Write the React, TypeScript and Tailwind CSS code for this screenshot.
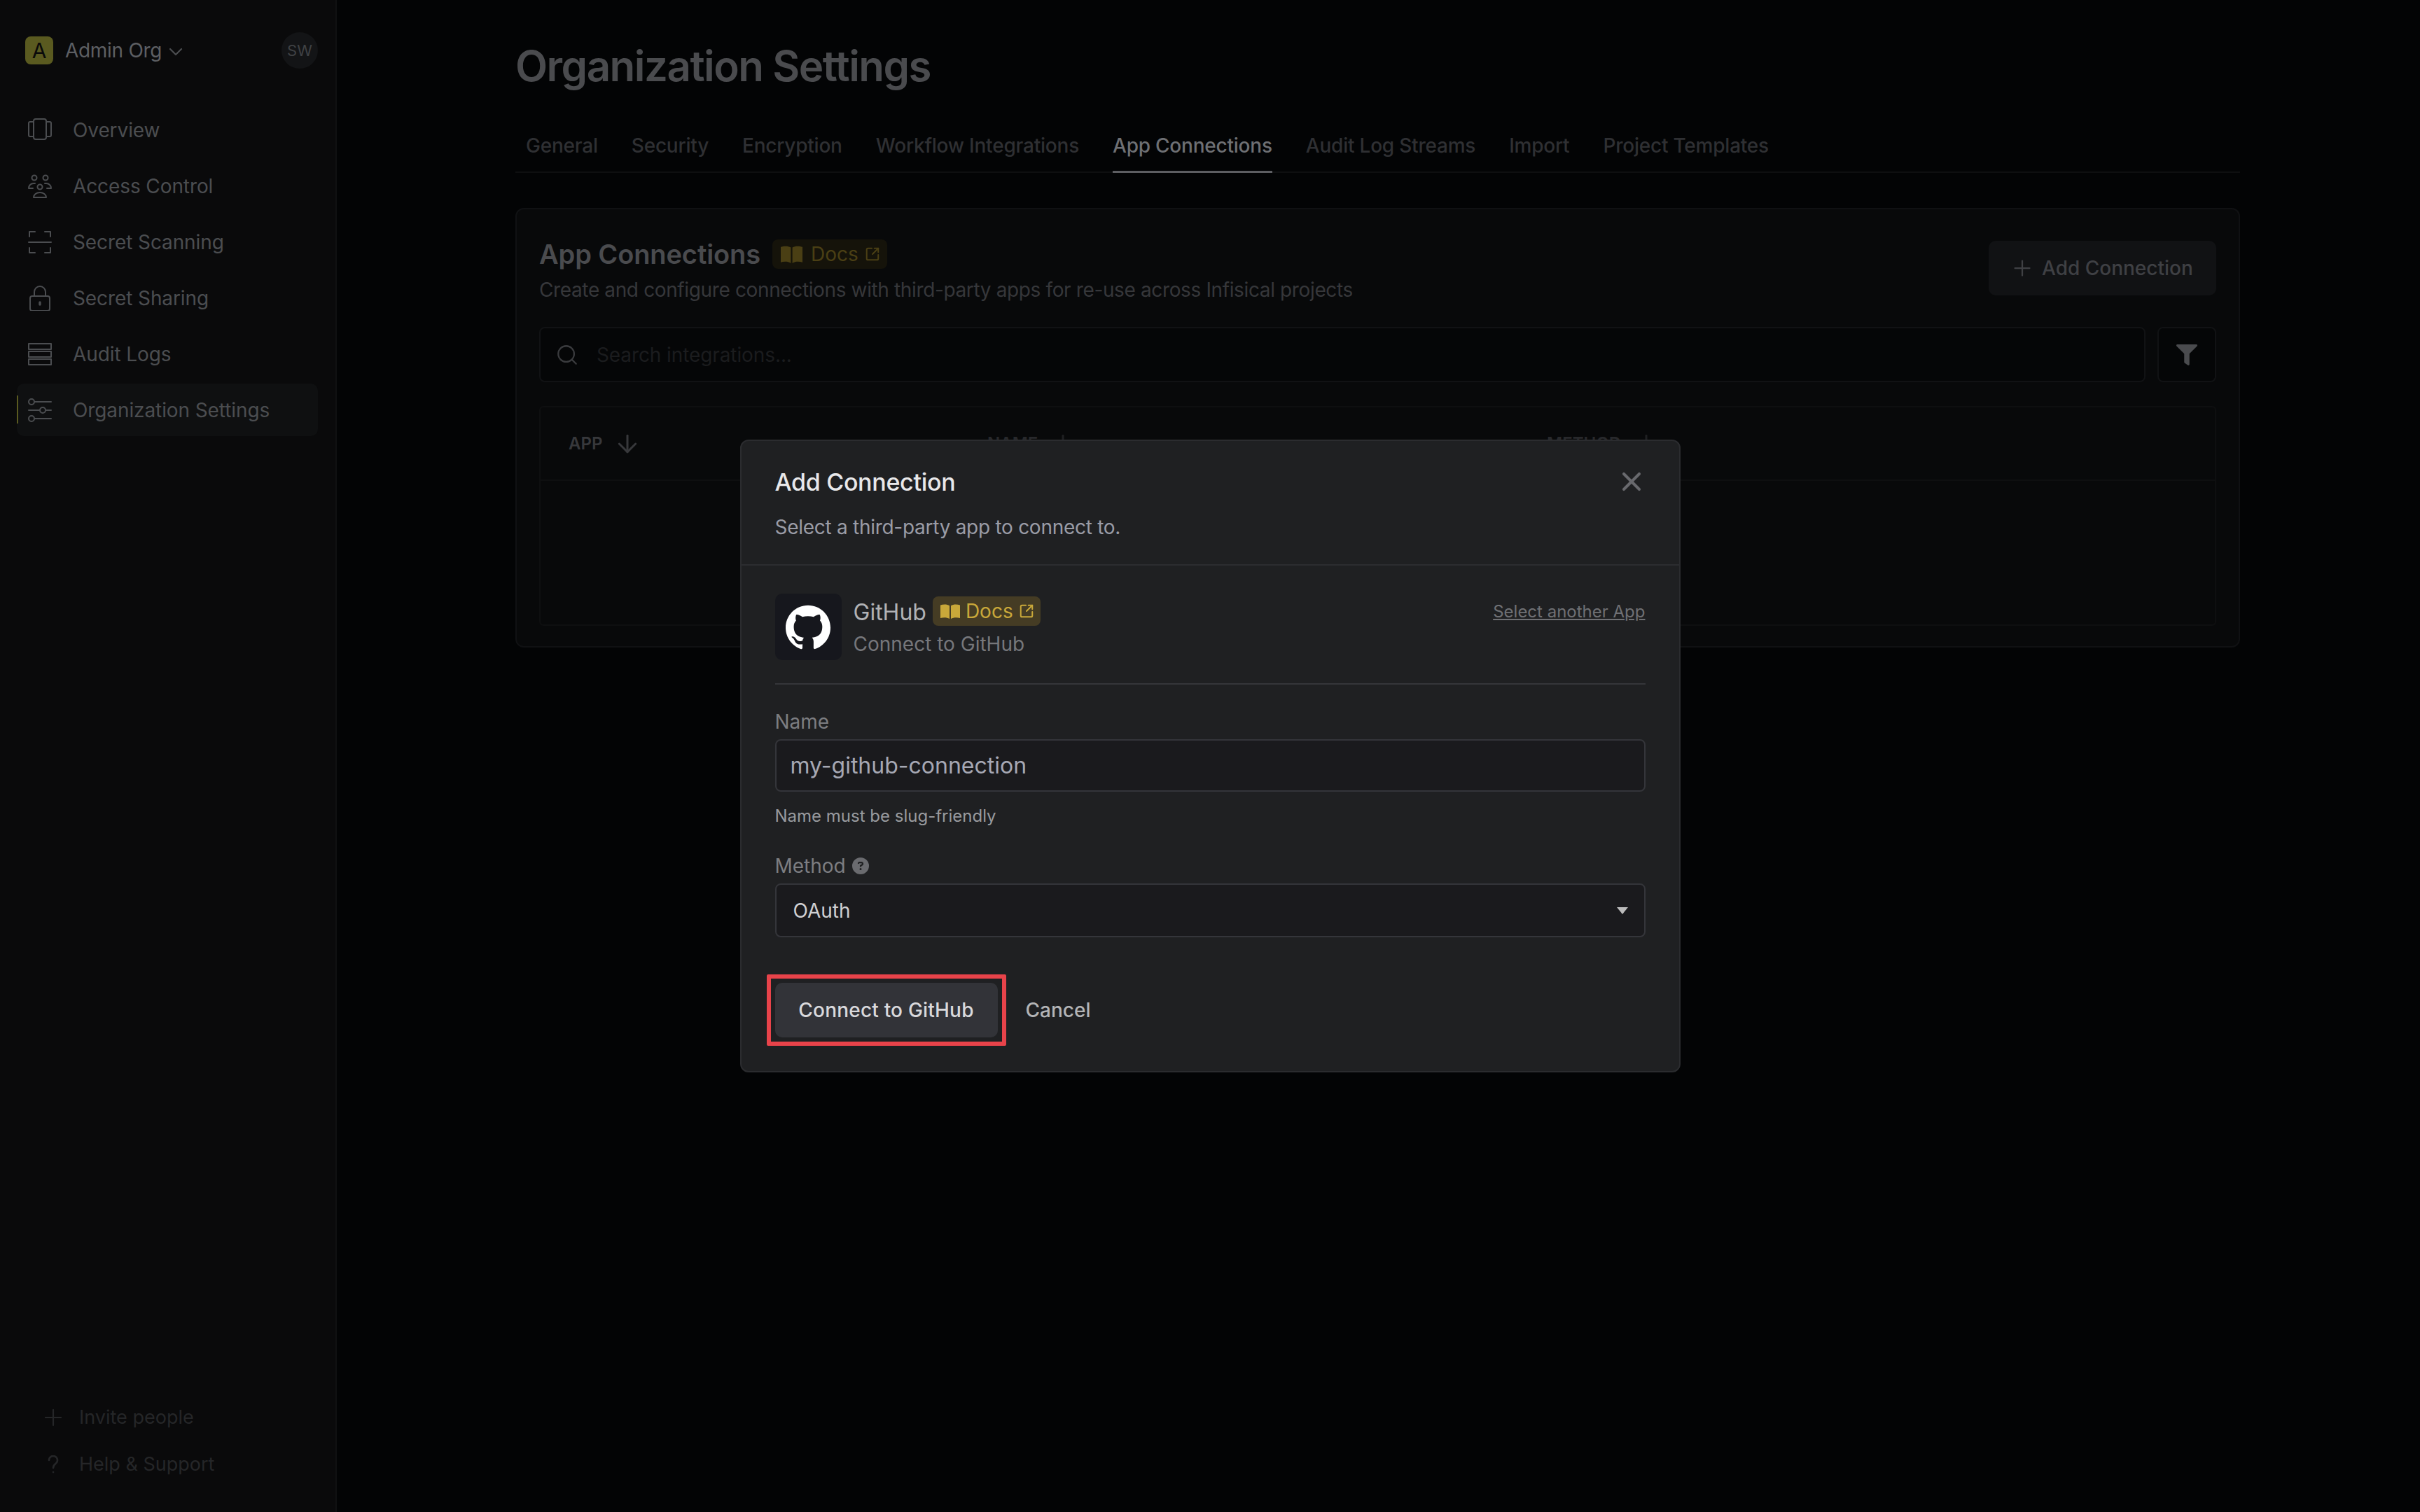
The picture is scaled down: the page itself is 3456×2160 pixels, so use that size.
import { ArrowDown, ChevronDown, Plus, Search, SquareArrowOutUpRight, X } from 'lucide-react';
import { FaFilter } from 'react-icons/fa';
import { FaCircleQuestion } from 'react-icons/fa6';
import { SiGithub } from 'react-icons/si';
import type { ReactNode } from 'react';

const iconProps = {
  viewBox: '0 0 36 36',
  fill: 'none',
  stroke: 'currentColor',
  strokeWidth: 2,
  strokeLinecap: 'round' as const,
  strokeLinejoin: 'round' as const,
  className: 'h-[36px] w-[36px] shrink-0',
};

const OverviewIcon = () => (
  <svg {...iconProps}>
    <rect x="9" y="2" width="18" height="29" rx="3" />
    <path d="M9 6H4a2 2 0 0 0-2 2v17a2 2 0 0 0 2 2h5M27 6h5a2 2 0 0 1 2 2v17a2 2 0 0 1-2 2h-5" />
  </svg>
);

const AccessIcon = () => (
  <svg {...iconProps}>
    <circle cx="10" cy="6" r="3.5" />
    <circle cx="26" cy="6" r="3.5" />
    <circle cx="18" cy="19" r="3.5" />
    <path d="M2 21c0-4 3-7 7-7h2M34 21c0-4-3-7-7-7h-2M2 21h6M34 21h-6M9 34c0-4 4-7 9-7s9 3 9 7z" />
  </svg>
);

const ScanIcon = () => (
  <svg {...iconProps}>
    <path d="M3 10V3h8M25 3h8v7M3 26v7h8M25 33h8v-7M2 18h32" />
  </svg>
);

const LockIcon = () => (
  <svg {...iconProps}>
    <rect x="4" y="15" width="28" height="21" rx="3" />
    <path d="M10 15V9a8 8 0 0 1 16 0v6" />
    <path d="M18 24v3" strokeWidth="3.4" />
  </svg>
);

const LogsIcon = () => (
  <svg {...iconProps}>
    <rect x="2" y="3" width="32" height="8" />
    <rect x="2" y="14" width="32" height="8" />
    <rect x="2" y="25" width="32" height="8" />
  </svg>
);

const SlidersIcon = () => (
  <svg {...iconProps}>
    <circle cx="6" cy="6" r="4" />
    <circle cx="22" cy="18" r="4" />
    <circle cx="6" cy="30" r="4" />
    <path d="M10 6h24M2 18h16M26 18h8M10 30h24" />
  </svg>
);

// open book with two solid leaves, wider than the FontAwesome one
const BookIcon = ({ className }: { className: string }) => (
  <svg viewBox="0 0 28 21" preserveAspectRatio="none" fill="currentColor" className={className}>
    <path d="M0 1.5C4 .2 9.5 0 13 2.2V21C9.5 18.8 4 18.8 0 20z" />
    <path d="M28 1.5C24 .2 18.5 0 15 2.2V21C18.5 18.8 24 18.8 28 20z" />
  </svg>
);

const navItems: { label: string; icon: ReactNode; active?: boolean }[] = [
  { label: 'Overview', icon: <OverviewIcon /> },
  { label: 'Access Control', icon: <AccessIcon /> },
  { label: 'Secret Scanning', icon: <ScanIcon /> },
  { label: 'Secret Sharing', icon: <LockIcon /> },
  { label: 'Audit Logs', icon: <LogsIcon /> },
  { label: 'Organization Settings', icon: <SlidersIcon />, active: true },
];

const tabs = [
  'General',
  'Security',
  'Encryption',
  'Workflow Integrations',
  'App Connections',
  'Audit Log Streams',
  'Import',
  'Project Templates',
];

const Sidebar = () => (
  <aside className="flex h-full w-[481px] shrink-0 flex-col border-r-2 border-[#101112] bg-[#0a0a0b] pl-[24px] pr-[25px]">
    <div className="mt-[46px] flex h-[52px] items-center justify-between">
      <div className="flex items-center pl-[12px]">
        <div className="flex h-[40px] w-[40px] items-center justify-center rounded-[8px] bg-[#5a5a20] text-[30px] text-[#0a0a0a]">
          A
        </div>
        <span className="ml-[17px] text-[28px] tracking-[-0.3px] text-[#5d5f63]">Admin Org</span>
        <ChevronDown className="ml-[4px] mt-[4px] h-[32px] w-[32px] text-[#4c4e51]" strokeWidth={1.6} />
      </div>
      <div className="flex h-[52px] w-[52px] items-center justify-center rounded-full bg-[#131416] text-[22px] text-[#3f4144]">
        SW
      </div>
    </div>

    <nav className="mt-[50px] flex flex-col gap-[5px]">
      {navItems.map((item) => (
        <div
          key={item.label}
          className={`relative flex h-[75px] items-center gap-[29px] rounded-[10px] pl-[15px] text-[28px] tracking-[-0.1px] text-[#4b4d50] ${
            item.active ? 'bg-[#0f1011]' : ''
          }`}
        >
          {item.active && <span className="absolute left-0 top-[17px] h-[40px] w-[2px] bg-[#5a5a20]" />}
          {item.icon}
          <span>{item.label}</span>
        </div>
      ))}
    </nav>

    <div className="mb-[48px] mt-auto flex flex-col gap-[27px] pl-[33px] text-[27px] text-[#252628]">
      <div className="flex h-[40px] items-center gap-[18px]">
        <Plus className="h-[38px] w-[38px]" strokeWidth={1.4} />
        <span>Invite people</span>
      </div>
      <div className="flex h-[40px] items-center gap-[18px]">
        <span className="flex w-[38px] justify-center">
          <svg viewBox="0 0 24 26" className="h-[26px] w-[24px]" fill="none" stroke="currentColor" strokeWidth="2.6" strokeLinecap="round">
            <path d="M6 7a6 6 0 1 1 9.5 4.8C13 13.5 12 15 12 18" />
            <path d="M12 24v.1" />
          </svg>
        </span>
        <span>Help &amp; Support</span>
      </div>
    </div>
  </aside>
);

const Badge = ({ dim, className }: { dim?: boolean; className: string }) => (
  <span
    className={`flex h-[42px] items-center rounded-[8px] ${
      dim ? 'bg-[#15130a] text-[#4a3f14]' : 'bg-[#453c24] text-[#c9a83a]'
    } ${className}`}
  >
    <BookIcon className={dim ? 'h-[25px] w-[31px]' : 'h-[21px] w-[28px]'} />
    <span className={`text-[28px] ${dim ? 'ml-[12px]' : 'ml-[8px]'}`}>Docs</span>
    <SquareArrowOutUpRight className={`h-[22px] w-[22px] ${dim ? 'ml-[9px]' : 'ml-[8px]'}`} strokeWidth={2.2} />
  </span>
);

const Page = () => (
  <main className="h-full flex-1 bg-[#030405] pl-[255px] pr-[257px]">
    <h1 className="mt-[59px] text-[60px] font-semibold leading-[70px] tracking-[-1.5px] text-[#4a4b4e]">
      Organization Settings
    </h1>

    <div className="mt-[39px] flex h-[79px] gap-[48px] border-b-2 border-[#0e0f10] pl-[15px]">
      {tabs.map((tab) => (
        <div
          key={tab}
          className={`-mb-[2px] flex items-center border-y-[3px] border-t-transparent text-[28px] font-medium tracking-[-0.22px] ${
            tab === 'App Connections' ? 'border-b-[#5d5e62] text-[#6e7074]' : 'border-b-transparent text-[#2f3033]'
          }`}
        >
          {tab}
        </div>
      ))}
    </div>

    <section className="mt-[50px] h-[628px] rounded-[12px] border-2 border-[#101113] bg-[#08090a] px-[32px] pt-[43px]">
      <div className="flex justify-between">
        <div>
          <div className="flex items-center">
            <h2 className="text-[38px] font-semibold leading-[42px] tracking-[-0.1px] text-[#4a4b4e]">App Connections</h2>
            <Badge dim className="ml-[17px] w-[164px] pl-[12px]" />
          </div>
          <p className="mt-[10px] text-[28px] leading-[40px] tracking-[-0.37px] text-[#36373a]">
            Create and configure connections with third-party apps for re-use across Infisical projects
          </p>
        </div>
        <button className="mt-[2px] flex h-[78px] w-[325px] items-center rounded-[10px] bg-[#111214] pl-[30px] text-[28px] font-medium text-[#3f4044]">
          <Plus className="h-[36px] w-[36px]" strokeWidth={1.5} />
          <span className="ml-[10px]">Add Connection</span>
        </button>
      </div>

      <div className="mt-[33px] flex gap-[17px]">
        <div className="flex h-[79px] flex-1 items-center rounded-[8px] border-2 border-[#111214] bg-[#050607] pl-[21px]">
          <Search className="h-[34px] w-[34px] text-[#3a3b3e]" strokeWidth={1.6} />
          <span className="ml-[25px] text-[28px] tracking-[-0.1px] text-[#1b1c1e]">Search integrations...</span>
        </div>
        <div className="flex h-[79px] w-[84px] items-center justify-center rounded-[8px] border-2 border-[#111214] bg-[#050607]">
          <FaFilter className="h-[30px] w-[30px] text-[#4a4b4e]" />
        </div>
      </div>

      <div className="mt-[34px] h-[314px] rounded-[6px] border-2 border-[#0e0f10]">
        <div className="flex h-[105px] items-center border-b-2 border-[#0e0f10] text-[24px] font-semibold text-[#37383b]">
          <div className="ml-[40px] flex w-[598px] items-center gap-[16px]">
            APP
            <ArrowDown className="h-[40px] w-[40px]" strokeWidth={1.8} />
          </div>
          <div className="flex w-[799px] items-center gap-[16px] text-[#28292c]">
            NAME
            <ArrowDown className="h-[40px] w-[40px] text-[#1f2022]" strokeWidth={1.8} />
          </div>
          <div className="flex items-center gap-[16px] text-[#28292c]">
            METHOD
            <ArrowDown className="h-[40px] w-[40px] text-[#1f2022]" strokeWidth={1.8} />
          </div>
        </div>
      </div>
    </section>
  </main>
);

const Field = ({ label, children }: { label: ReactNode; children: ReactNode }) => (
  <div>
    <div className="mb-[7px] flex h-[36px] items-center text-[28px] text-[#7c7d81]">{label}</div>
    {children}
  </div>
);

const Modal = () => (
  <div className="absolute inset-0 flex items-center justify-center">
    <div className="w-[1343px] rounded-[12px] border-2 border-[#2b2c2f] bg-[#1f2022]">
      <div className="relative border-b-2 border-[#2c2d30] px-[48px] pb-[33px] pt-[37px]">
        <h3 className="text-[34px] font-medium leading-[44px] tracking-[-0.3px] text-[#e8e8ea]">Add Connection</h3>
        <p className="mt-[22px] text-[28px] leading-[40px] tracking-[-0.28px] text-[#9a9ca6]">
          Select a third-party app to connect to.
        </p>
        <X className="absolute right-[46px] top-[36px] h-[44px] w-[44px] text-[#68696d]" strokeWidth={2.2} />
      </div>

      <div className="px-[48px] pb-[48px] pt-[40px]">
        <div className="flex items-start border-b-2 border-[#35363a] pb-[33px]">
          <div className="flex h-[95px] w-[95px] items-center justify-center rounded-[10px] bg-[#16171d]">
            <SiGithub className="h-[64px] w-[64px] text-white" />
          </div>
          <div className="ml-[17px]">
            <div className="mt-[4px] flex items-start">
              <span className="pt-[2px] text-[32px] leading-[42px] text-[#b1b2b5]">GitHub</span>
              <Badge className="ml-[9px] w-[154px] pl-[11px]" />
            </div>
            <p className="mt-[4px] text-[28px] leading-[40px] text-[#76777b]">Connect to GitHub</p>
          </div>
          <span className="ml-auto mt-[10px] text-[24px] leading-[32px] text-[#6f7074] underline">Select another App</span>
        </div>

        <div className="mt-[35px]">
          <Field label="Name">
            <div className="flex h-[75px] items-center rounded-[8px] border-2 border-[#34353a] bg-[#1a1a1d] pl-[20px] text-[32px] text-[#a6a8b4]">
              my-github-connection
            </div>
          </Field>
          <p className="mb-[37px] mt-[19px] text-[24px] leading-[32px] text-[#989a9e]">Name must be slug-friendly</p>
          <Field
            label={
              <>
                Method
                <FaCircleQuestion className="ml-[9px] h-[24px] w-[24px] text-[#6a6b6f]" />
              </>
            }
          >
            <div className="flex h-[77px] items-center justify-between rounded-[8px] border-2 border-[#34353a] bg-[#1a1a1d] pl-[24px] pr-[23px] text-[28px] text-[#d0d0d2]">
              OAuth
              <span className="h-0 w-0 border-x-[8px] border-t-[10px] border-x-transparent border-t-[#bbbbbb]" />
            </div>
          </Field>
        </div>

        <div className="mt-[65px] flex items-center gap-[40px]">
          <div className="relative">
            <button className="h-[78px] w-[318px] rounded-[10px] bg-[#323338] text-[28px] font-medium tracking-[0.2px] text-[#d9d9dc]">
              Connect to GitHub
            </button>
            <span className="absolute -bottom-[12px] -left-[12px] -right-[12px] -top-[12px] rounded-[2px] border-[6px] border-[#e8434a]" />
          </div>
          <span className="text-[28px] font-medium text-[#b3b4b6]">Cancel</span>
        </div>
      </div>
    </div>
  </div>
);

export default function App() {
  return (
    <div className="relative flex h-[2160px] w-[3456px] overflow-hidden bg-[#030405] [font-family:Inter,sans-serif]">
      <Sidebar />
      <Page />
      <Modal />
    </div>
  );
}
